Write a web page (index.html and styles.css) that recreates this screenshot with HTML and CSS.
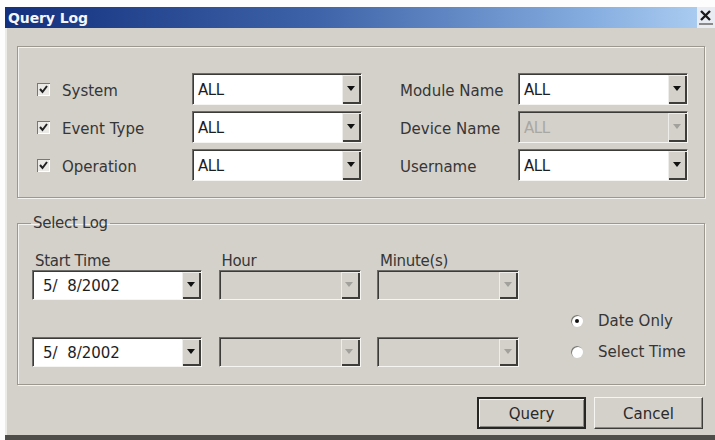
FILE: index.html
```html
<!DOCTYPE html>
<html lang="en">
<head>
    <meta charset="UTF-8">
    <title>Query Log</title>
    <link rel="stylesheet" href="styles.css">
</head>
<body>
    <div class="window">
        <div class="titlebar">
            <div class="caption">Query Log</div>
            <div class="close">
                <svg width="14" height="17" viewBox="0 0 14 17">
                    <path d="M2 2 L11 11 M11 2 L2 11" stroke="#1a1a1a" stroke-width="2.4"/>
                    <rect x="0" y="14" width="14" height="2" fill="#8a8a8a"/>
                </svg>
            </div>
        </div>

        <fieldset class="group filters">
            <div class="filter-grid">
                <span class="check"><svg width="13" height="13" viewBox="0 0 13 13"><path d="M3 6 L5.5 9 L10 3" stroke="#222" stroke-width="2" fill="none"/></svg></span>
                <span class="label">System</span>
                <div class="combo"><span class="value">ALL</span><span class="arrow"></span></div>
                <span></span>
                <span class="label">Module Name</span>
                <div class="combo"><span class="value">ALL</span><span class="arrow"></span></div>

                <span class="check"><svg width="13" height="13" viewBox="0 0 13 13"><path d="M3 6 L5.5 9 L10 3" stroke="#222" stroke-width="2" fill="none"/></svg></span>
                <span class="label">Event Type</span>
                <div class="combo"><span class="value">ALL</span><span class="arrow"></span></div>
                <span></span>
                <span class="label">Device Name</span>
                <div class="combo disabled"><span class="value">ALL</span><span class="arrow"></span></div>

                <span class="check"><svg width="13" height="13" viewBox="0 0 13 13"><path d="M3 6 L5.5 9 L10 3" stroke="#222" stroke-width="2" fill="none"/></svg></span>
                <span class="label">Operation</span>
                <div class="combo"><span class="value">ALL</span><span class="arrow"></span></div>
                <span></span>
                <span class="label">Username</span>
                <div class="combo"><span class="value">ALL</span><span class="arrow"></span></div>
            </div>
        </fieldset>

        <fieldset class="group select-log">
            <legend>Select Log</legend>
            <div class="select-body">
                <div class="time-grid">
                    <span class="field-label">Start Time</span>
                    <span class="field-label">Hour</span>
                    <span class="field-label">Minute(s)</span>

                    <div class="combo"><span class="value date">5/&nbsp;&nbsp;8/2002</span><span class="arrow"></span></div>
                    <div class="combo disabled"><span class="value"></span><span class="arrow"></span></div>
                    <div class="combo disabled"><span class="value"></span><span class="arrow"></span></div>

                    <div class="combo second"><span class="value date">5/&nbsp;&nbsp;8/2002</span><span class="arrow"></span></div>
                    <div class="combo disabled second"><span class="value"></span><span class="arrow"></span></div>
                    <div class="combo disabled second"><span class="value"></span><span class="arrow"></span></div>
                </div>
                <div class="radios">
                    <div class="radio-row"><span class="radio checked"></span>Date Only</div>
                    <div class="radio-row"><span class="radio"></span>Select Time</div>
                </div>
            </div>
        </fieldset>

        <div class="buttons">
            <button class="btn default">Query</button>
            <button class="btn">Cancel</button>
        </div>
    </div>
</body>
</html>
```

FILE: styles.css
```css
body {
    margin: 0;
    background-color: #fdfdfd;
    font-family: "DejaVu Sans", Verdana, sans-serif;
    font-size: 15px;
    color: #363636;
}

.window {
    margin: 7px 0 0 5px;
    height: 428px;
    background-color: #d4d1ca;
    border-bottom: 5px solid #4e4d4a;
    box-shadow: inset 2px 0 0 #ecebe6;
    display: flex;
    flex-direction: column;
}

.titlebar {
    display: flex;
    height: 21px;
}

.caption {
    flex: 1;
    background: linear-gradient(to right, #13307e 0%, #3e63a8 45%, #86aee0 85%, #a9cbf0 100%);
    color: #f4f6fb;
    font-weight: bold;
    font-size: 14px;
    line-height: 22px;
    padding-left: 3px;
    letter-spacing: -0.1px;
}

.close {
    width: 18px;
    background-color: #e9edf3;
    display: flex;
    align-items: center;
    justify-content: center;
}

/* group boxes */
.group {
    margin: 0 10px 0 12px;
    padding: 0;
    border: 1px solid #9c9890;
    box-shadow: inset 1px 1px 0 #f4f3ef, 1px 1px 0 #f4f3ef;
    min-width: 0;
}

.filters {
    margin-top: 18px;
    padding: 26px 0 17px 19px;
}

.filter-grid {
    display: grid;
    grid-template-columns: 25px 130px 170px 38px 118px 170px;
    grid-auto-rows: 31px;
    row-gap: 7px;
    align-items: center;
}

.check {
    width: 13px;
    height: 13px;
    margin-top: 2px;
    background-color: #ebeae6;
    box-shadow: inset 1px 1px 0 #777, inset -1px -1px 0 #fff;
    display: flex;
}

.label {
    white-space: nowrap;
    padding-top: 4px;
}

/* combo boxes */
.combo {
    height: 32px;
    box-sizing: border-box;
    display: flex;
    background-color: #fff;
    border: 1px solid;
    border-color: #6e6c68 #f6f5f2 #f6f5f2 #6e6c68;
    box-shadow: inset 1px 1px 0 #3c3b39;
}

.combo .value {
    flex: 1;
    padding: 7px 0 0 5px;
    color: #1e1e1e;
    letter-spacing: -0.4px;
}

.combo .value.date {
    padding-left: 10px;
    padding-top: 6px;
    letter-spacing: 0;
}

.combo .arrow {
    width: 19px;
    margin: 1px 0 0 0;
    background-color: #d4d1ca;
    box-shadow: inset 1px 1px 0 #eeede9, inset -2px -2px 0 #3e3d3a;
    display: flex;
    align-items: center;
    justify-content: center;
}

.combo .arrow::after {
    content: "";
    border-left: 4px solid transparent;
    border-right: 4px solid transparent;
    border-top: 5px solid #111;
    margin: 0 2px 2px 0;
}

.combo.disabled {
    background-color: #d4d1ca;
}

.combo.disabled .value {
    color: #a9a7a2;
}

.combo.disabled .arrow::after {
    border-top-color: #a3a19c;
}

/* select log */
.select-log {
    margin-top: 15px;
}

.select-log legend {
    margin-left: 13px;
    padding: 0 2px;
    line-height: 20px;
    letter-spacing: -0.3px;
}

.select-body {
    display: flex;
    padding: 19px 0 17px 14px;
}

.time-grid {
    display: grid;
    grid-template-columns: 170px 142px 142px;
    column-gap: 16.5px;
}

.field-label {
    line-height: 17px;
    padding: 1px 0 0 3px;
    letter-spacing: -0.3px;
}

.time-grid .combo {
    height: 30px;
}

.time-grid .combo.second {
    margin-top: 37px;
}

.radios {
    margin-left: 52px;
    display: flex;
    flex-direction: column;
    justify-content: flex-end;
}

.radio-row {
    height: 31px;
    display: flex;
    align-items: center;
    gap: 15px;
}

.radio {
    width: 12px;
    height: 12px;
    border-radius: 50%;
    background-color: #fff;
    box-shadow: inset 1px 1px 0 #7a7873;
    display: flex;
    align-items: center;
    justify-content: center;
}

.radio.checked::after {
    content: "";
    width: 4px;
    height: 4px;
    border-radius: 50%;
    background-color: #111;
}

/* buttons */
.buttons {
    display: flex;
    justify-content: flex-end;
    gap: 8px;
    margin: 12px 12px 0 0;
}

.btn {
    width: 109px;
    height: 32px;
    font-family: "DejaVu Sans", Verdana, sans-serif;
    font-size: 15px;
    color: #2a2a2a;
    background-color: #d4d1ca;
    border: 1px solid;
    border-color: #f6f5f2 #3e3d3a #3e3d3a #f6f5f2;
    box-shadow: inset -1px -1px 0 #8a8883;
    padding: 2px 0 0 0;
}

.btn.default {
    border: 2px solid #262624;
    box-shadow: inset 1px 1px 0 #f6f5f2, inset -1px -1px 0 #8a8883;
}
```
